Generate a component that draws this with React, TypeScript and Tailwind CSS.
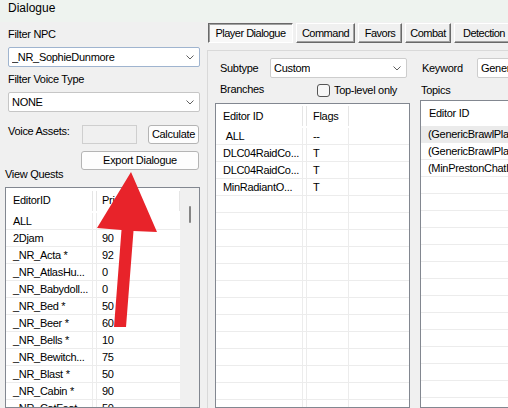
import React from "react"

const quests: [string, string][] = [
  ["ALL", ""],
  ["2Djam", "90"],
  ["_NR_Acta *", "92"],
  ["_NR_AtlasHu...", "0"],
  ["_NR_Babydoll...", "0"],
  ["_NR_Bed *", "50"],
  ["_NR_Beer *", "60"],
  ["_NR_Bells *", "10"],
  ["_NR_Bewitch...", "75"],
  ["_NR_Blast *", "50"],
  ["_NR_Cabin *", "90"],
  ["_NR_CatFeat...", "50"],
  ["_NR_Chains *", "50"],
]

const branches: [string, string][] = [
  ["\u00a0ALL", "--"],
  ["DLC04RaidCo...", "T"],
  ["DLC04RaidCo...", "T"],
  ["MinRadiantO...", "T"],
]

const topics = ["(GenericBrawlPlayerWins)", "(GenericBrawlPlayerLoses)", "(MinPrestonChatIntro)"]

const tabs = [
  { label: "Player Dialogue", w: "w-[85px]", active: true },
  { label: "Command", w: "w-[59px]" },
  { label: "Favors", w: "w-[44px]" },
  { label: "Combat", w: "w-[46px]" },
  { label: "Detection", w: "w-[60px]" },
]

function Chevron() {
  return (
    <svg width="8" height="5" viewBox="0 0 8 5" className="shrink-0">
      <polyline points="0.5,0.5 4,4 7.5,0.5" fill="none" stroke="#606060" strokeWidth="1" />
    </svg>
  )
}

function Combo({ value, className }: { value: string; className: string }) {
  return (
    <div className={`h-[20px] flex items-center justify-between bg-white border rounded-[2px] pl-[3px] pr-[5px] ${className}`}>
      <span className="whitespace-nowrap overflow-hidden">{value}</span>
      <Chevron />
    </div>
  )
}

function Button({ children, className }: { children: React.ReactNode; className: string }) {
  return (
    <div className={`h-[19px] flex items-center justify-center bg-[#fdfdfd] border border-[#b4b4b4] rounded-[3px] ${className}`}>
      {children}
    </div>
  )
}

function QuestList() {
  return (
    <div className="ml-[5px] mt-[6px] w-[195px] flex-1 min-h-0 flex bg-white border border-[#828790] overflow-hidden">
      <div className="w-[174px] flex flex-col">
        <div className="h-[25px] shrink-0 flex items-center">
          <div className="w-[87px] h-[20px] flex items-center pl-[7px] border-r border-[#e5e5e5]">EditorID</div>
          <div className="w-[4px] h-[20px] border-r border-[#e5e5e5]" />
          <div className="flex-1 h-[20px] flex items-center pl-[5px] border-r border-[#e5e5e5]">Priority</div>
        </div>
        {quests.map(([id, pr], i) => (
          <div key={i} className="h-[17px] shrink-0 flex border-b border-[#ececec]">
            <div className="w-[87px] flex items-center pl-[7px] border-r border-[#ececec] whitespace-nowrap">{id}</div>
            <div className="w-[4px] border-r border-[#ececec]" />
            <div className="flex-1 flex items-center pl-[5px]">{pr}</div>
          </div>
        ))}
      </div>
      <div className="flex-1 bg-[#f0f0f0] pl-[9px] pt-[18px]">
        <div className="w-[2px] h-[17px] rounded-full bg-[#858585]" />
      </div>
    </div>
  )
}

function LeftPanel() {
  return (
    <div className="w-[207px] shrink-0 flex flex-col">
      <div className="ml-[8px] mt-[6px]">Filter NPC</div>
      <Combo value="_NR_SophieDunmore" className="ml-[8px] mt-[6px] w-[192px] border-[#9fb4cf]" />
      <div className="ml-[8px] mt-[6px]">Filter Voice Type</div>
      <Combo value="NONE" className="ml-[8px] mt-[6px] w-[192px] border-[#c6c6c6]" />
      <div className="mt-[13px] flex items-start">
        <div className="ml-[8px] w-[74px]">Voice Assets:</div>
        <div className="w-[55px] h-[19px] border border-[#cfcfcf]" />
        <Button className="ml-[11px] w-[51px]">Calculate</Button>
      </div>
      <Button className="ml-[81px] mt-[7px] w-[118px]">Export Dialogue</Button>
      <div className="ml-[5px] -mt-[2px]">View Quests</div>
      <QuestList />
    </div>
  )
}

function Tab({ label, w, active }: { label: string; w: string; active?: boolean }) {
  return active ? (
    <div className={`${w} h-[20px] shrink-0 flex items-center justify-center whitespace-nowrap tracking-[-0.5px] border-t border-l border-[#696969] border-b border-r border-b-white border-r-white bg-[#f8f8f8] shadow-[inset_1px_1px_0_#a0a0a0]`}>
      {label}
    </div>
  ) : (
    <div className={`${w} h-[20px] shrink-0 flex items-center justify-center whitespace-nowrap tracking-[-0.5px] border-t border-l border-white border-b border-r border-b-[#696969] border-r-[#696969] bg-[#f0f0f0] shadow-[inset_-1px_-1px_0_#a0a0a0]`}>
      {label}
    </div>
  )
}

function BranchList() {
  const rows = [...branches, ...Array.from({ length: 16 }, () => ["", ""] as [string, string])]
  return (
    <div className="mt-[5px] w-[195px] flex-1 min-h-0 bg-white border border-[#828790] overflow-hidden flex flex-col">
      <div className="h-[24px] shrink-0 flex items-center">
        <div className="w-[87px] h-[20px] flex items-center pl-[7px] border-r border-[#e5e5e5]">Editor ID</div>
        <div className="w-[4px] h-[20px] border-r border-[#e5e5e5]" />
        <div className="w-[42px] h-[20px] flex items-center pl-[6px] border-r border-[#e5e5e5]">Flags</div>
      </div>
      {rows.map(([id, flag], i) => (
        <div key={i} className="h-[17px] shrink-0 flex border-b border-[#ececec]">
          <div className="w-[87px] flex items-center pl-[7px] border-r border-[#ececec] whitespace-nowrap">{id}</div>
          <div className="w-[4px] border-r border-[#ececec]" />
          <div className="w-[42px] flex items-center pl-[6px] border-r border-[#ececec]">{flag}</div>
        </div>
      ))}
    </div>
  )
}

function TopicList() {
  const rows = [...topics, ...Array.from({ length: 16 }, () => "")]
  return (
    <div className="mt-[2px] w-[200px] flex-1 min-h-0 bg-white border border-[#828790] overflow-hidden flex flex-col">
      <div className="h-[25px] shrink-0 flex items-center pl-[8px]">Editor ID</div>
      {rows.map((t, i) => (
        <div
          key={i}
          className={`h-[17px] shrink-0 flex items-center pl-[7px] border-b border-[#ececec] whitespace-nowrap ${i === 0 ? "bg-[#ebebeb]" : ""}`}
        >
          {t}
        </div>
      ))}
    </div>
  )
}

function RightPanel() {
  return (
    <div className="flex-1 min-w-0 flex flex-col overflow-hidden">
      <div className="mt-[1px] ml-[1px] flex gap-[3px]">
        {tabs.map((t) => (
          <Tab key={t.label} {...t} />
        ))}
      </div>
      <div className="mt-[7px] flex-1 min-h-0 flex flex-col border-t border-l border-[#d9d9d9]">
        <div className="mt-[7px] flex items-center">
          <div className="ml-[12px] w-[50px] shrink-0">Subtype</div>
          <Combo value="Custom" className="w-[137px] shrink-0 border-[#cdcdcd]" />
          <div className="ml-[15px] w-[55px] shrink-0">Keyword</div>
          <Combo value="GenericBrawlKeyword" className="w-[120px] shrink-0 border-[#cdcdcd]" />
        </div>
        <div className="flex-1 min-h-0 flex mt-[5px]">
          <div className="ml-[7px] w-[195px] shrink-0 flex flex-col">
            <div className="h-[15px] flex items-center">
              <div className="ml-[5px] w-[97px] -mt-[2px]">Branches</div>
              <div className="w-[13px] h-[13px] rounded-[3px] border border-[#555555] bg-[#f7f7f7]" />
              <div className="ml-[4px]">Top-level only</div>
            </div>
            <BranchList />
          </div>
          <div className="ml-[10px] w-[200px] shrink-0 flex flex-col">
            <div className="h-[15px] flex items-center pl-[1px]">Topics</div>
            <TopicList />
          </div>
        </div>
      </div>
    </div>
  )
}

export default function App() {
  return (
    <div className="relative w-[508px] h-[408px] overflow-hidden bg-[#f0f0f0] flex flex-col text-[11px] leading-[13px] tracking-[-0.3px] text-black font-['Liberation_Sans',Arial,sans-serif]">
      <div className="h-[22px] shrink-0 bg-[#eef3ef] pl-[8px] pt-[1px] text-[12px] leading-[15px] tracking-normal">Dialogue</div>
      <div className="flex flex-1 min-h-0">
        <LeftPanel />
        <RightPanel />
      </div>
      {/* annotation arrow pointing at the export button */}
      <svg className="absolute left-0 top-0 pointer-events-none" width="508" height="408" viewBox="0 0 508 408">
        <polygon points="131,172 157,232 133.5,231 126,327 114,327 121.5,230 97,228" fill="#e8232a" />
      </svg>
    </div>
  )
}
